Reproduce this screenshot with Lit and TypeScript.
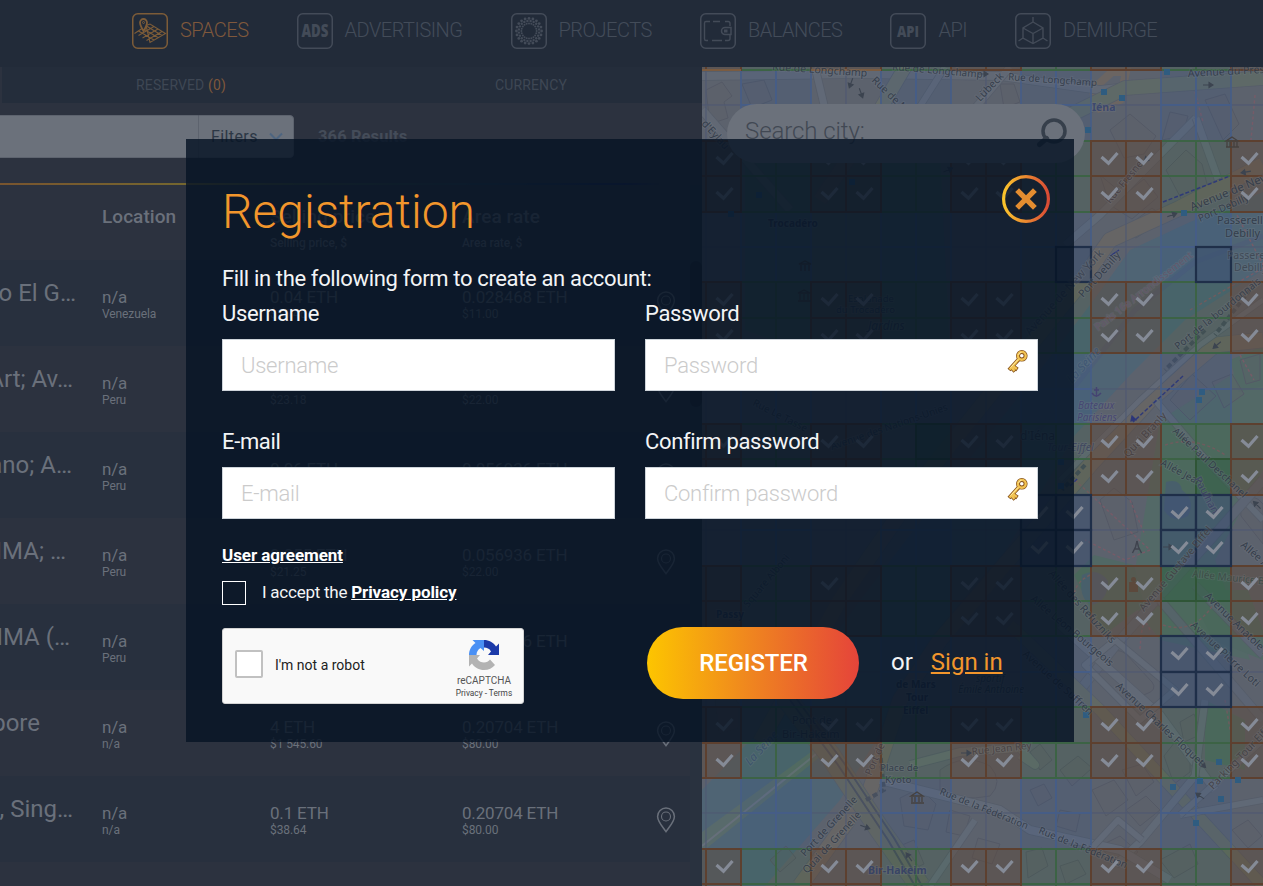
import { LitElement, html, svg, css } from "lit";
import { customElement } from "lit/decorators.js";

const LIGHT = "#434b58";

/* ---------- Map ---------- */

const COLS = Array.from({ length: 17 }, (_, i) => 671 + i * 35);
const rowY = (k: number) => Math.round(70 + 35.4 * k);

type Kind = "sold" | "free" | "blue" | "plain" | "navy" | "park";

const NAVY = new Set(["5:10", "5:14", ...[12, 13].flatMap((r) => [9, 10, 13, 14].map((c) => `${r}:${c}`)), ...[16, 17].flatMap((r) => [13, 14].map((c) => `${r}:${c}`))]);
const PARK = new Set(["10:6", "11:14", "14:13", "14:14"]);
const UNCHECKED = new Set(["5:10", "5:14", "14:0", "14:4", "15:0", "15:3", "15:4"]);

const kindOf = (r: number, c: number): Kind => {
  const key = `${r}:${c}`;
  if (NAVY.has(key)) return "navy";
  if (PARK.has(key)) return "park";
  const inner = ((c % 4) + 4) % 4 === 1 || ((c % 4) + 4) % 4 === 2;
  const band = ((r % 4) + 4) % 4 >= 2;
  if (band) return inner ? "free" : "sold";
  return inner ? "blue" : "plain";
};

const FILL: Record<Kind, [string, number]> = {
  sold: ["#5c4f49", 0.62],
  free: ["#446057", 0.35],
  blue: ["#475b7c", 0.42],
  plain: ["#596172", 0.35],
  navy: ["#3d5270", 0.65],
  park: ["#38604b", 0.75],
};
const STROKE: Record<Kind, [string, number]> = {
  sold: ["#5d402f", 2],
  free: ["#3c6345", 2],
  blue: ["#465e88", 1.6],
  plain: ["#4f5972", 0.7],
  navy: ["#1f2f49", 2.2],
  park: ["#2f5536", 2],
};
const ORDER: Kind[] = ["plain", "blue", "free", "park", "sold", "navy"];

// [x, y, rotation, size, colour, text, style]
type Label = [number, number, number, number, string, string, string?];
const INK = "#303947";
const LABELS: Label[] = [
  [772, 70, 4, 10.5, INK, "Rue de Longchamp"],
  [892, 70, 5, 10, INK, "Rue de Longchamp"],
  [1008, 80, 4, 9.8, INK, "Rue de Longchamp"],
  [871, 81, 44, 10.5, INK, "Rue de M"],
  [980, 102, -46, 10.5, INK, "Lübeck"],
  [701, 124, 48, 10.5, INK, "d'Eylau"],
  [1092, 111, 0, 10.5, "#38446e", "Iéna", "bold"],
  [1188, 77, -3, 10.5, INK, "Avenue du Président"],
  [1192, 211, -22, 11.5, INK, "Avenue de New York"],
  [1200, 222, -24, 10, INK, "Port Debilly"],
  [1110, 204, -50, 10, "#453d42", "Rue Fresnel"],
  [1083, 298, -48, 10.5, INK, "Port Debilly"],
  [1030, 336, -48, 11.5, "#3a4250", "Avenue de New York"],
  [1217, 224, 0, 11, INK, "Passerelle"],
  [1225, 237, 0, 11, INK, "Debilly"],
  [1227, 259, 0, 10.5, "#3d4652", "Passerelle"],
  [1234, 271, 0, 10.5, "#3d4652", "Debilly"],
  [1098, 331, -38, 10, "#64576a", "Paris 16e Arrondissement"],
  [1178, 350, -39, 10, INK, "Port de la bourdonnais"],
  [1072, 384, -48, 12, "#3d5573", "La Seine", "italic"],
  [1078, 409, 0, 10, "#454372", "Bateaux", "italic"],
  [1077, 421, 0, 10, "#454372", "Parisiens", "italic"],
  [1047, 451, 0, 10.5, "#3d4560", "Tour-Eiffel", "italic"],
  [1020, 440, 0, 12, INK, "d'Iéna"],
  [1128, 458, -47, 10.5, "#453d3e", "Quai Branly"],
  [1172, 432, 43, 10, INK, "Allée Paul Deschanel"],
  [1160, 465, 28, 10, INK, "Allée Jean"],
  [1194, 479, 62, 10.5, "#3c3f66", "Paulhan"],
  [1240, 546, 41, 10.5, INK, "Allée Adrienne"],
  [1192, 577, 6, 10, "#3b4a45", "Allée Maurice Baumont"],
  [1144, 612, -50, 10.5, "#413e42", "Avenue Gustave Eiffel"],
  [1204, 597, 44, 10.5, INK, "Avenue Anatole France"],
  [1190, 626, 43, 10.5, INK, "Avenue Pierre Loti"],
  [1030, 600, 40, 10.5, INK, "Allée Léon Bourgeois"],
  [1048, 574, 48, 10.5, INK, "Allée des Refuzniks"],
  [1022, 655, 42, 10.5, INK, "Avenue de Suffren"],
  [1115, 687, 43, 10.5, INK, "Avenue Charles Floquet"],
  [1213, 790, -46, 10.5, "#413e42", "Parking Tour Eiffel"],
  [972, 755, -6, 10, "#463f41", "Rue Jean Rey"],
  [880, 771, 0, 9.8, INK, "Place de"],
  [885, 783, 0, 9.8, INK, "Kyoto"],
  [939, 794, 22, 9.8, INK, "Rue de la Fédération"],
  [1038, 833, 22, 9.8, INK, "Rue de la Fédération"],
  [750, 766, -47, 11.5, "#39506a", "La Seine", "italic"],
  [805, 857, -47, 10.2, INK, "Port de Grenelle"],
  [807, 874, -47, 10.2, INK, "Quai de Grenelle"],
  [871, 776, -66, 10, "#443d42", "Port de"],
  [868, 874, 0, 10.5, "#343f66", "Bir-Hakeim", "bold"],
  [768, 227, 0, 10, "#26324d", "Trocadéro", "bold"],
  [868, 330, 0, 12, "#2c3a4c", "Jardins", "italic"],
  [848, 302, 0, 9.5, "#2c3a4c", "Esplanade"],
  [836, 313, 0, 9.5, "#2c3a4c", "du Trocadéro"],
  [752, 405, 27, 10, "#2c3a4c", "Rue Le Tasse"],
  [832, 450, -19, 10, "#2c3a4c", "Avenue des Nations-Unies"],
  [748, 608, -50, 10, "#2c3a4c", "Square Alboni"],
  [716, 618, 0, 10, "#26324d", "Passy", "bold"],
  [792, 724, 0, 11, INK, "Pont de"],
  [782, 738, 0, 11, INK, "Bir-Hakeim"],
  [896, 688, 0, 10, "#26324d", "de Mars", "bold"],
  [906, 701, 0, 10, "#26324d", "Tour", "bold"],
  [903, 714, 0, 10, "#26324d", "Eiffel", "bold"],
  [976, 682, 0, 10, "#2c3a4c", "sportif", "italic"],
  [958, 693, 0, 10, "#2c3a4c", "Émile Anthoine", "italic"],
];

const ROADS: [string, number, string][] = [
  ["M702 76 L860 74 L1000 76 L1100 90 L1263 72", 8, "#6a7079"],
  ["M905 67 L868 130 L820 200", 13, "#707663"],
  ["M945 67 L905 130", 6, "#6a7079"],
  ["M1010 67 L948 140", 7, "#6a7079"],
  ["M702 110 L790 210", 8, "#6a7079"],
  ["M815 67 L830 130", 7, "#69717d"],
  ["M1060 120 L1125 88 L1263 78", 14, "#657160"],
  ["M1196 118 L1100 215 L1065 245", 7, "#68717b"],
  ["M1196 118 L1222 190", 7, "#68717b"],
  ["M1263 165 L1180 208 L1110 240 L1075 290 L1010 370 L930 470 L840 600 L760 742", 15, "#74695a"],
  ["M1263 340 L1215 345 L1150 400 L1090 465 L1030 535 L940 640 L900 700 L870 790 L800 886", 15, "#74695c"],
  ["M1263 300 L1200 345 L1140 400 L1060 480", 5, "#6c727c"],
  ["M1155 400 L1215 470 L1263 520", 6, "#68717b"],
  ["M1263 480 L1210 540 L1120 640 L1080 690", 9, "#5f6875"],
  ["M1195 585 L1263 655", 8, "#5f6875"],
  ["M1160 600 L1263 720", 8, "#5f6875"],
  ["M1060 625 L1160 715 L1215 790", 8, "#6a717b"],
  ["M1115 640 L1085 665 L1140 720 L1175 690 L1115 640", 6, "#6a717b"],
  ["M1010 625 L1100 710 L1263 886", 11, "#6a7058"],
  ["M1205 700 L1195 776 L1140 842 L1115 865", 7, "#68717b"],
  ["M880 780 L1000 810 L1030 830 L1120 850 L1170 880", 8, "#69717d"],
  ["M1090 850 L1118 820 L1142 840", 6, "#69717d"],
  ["M910 765 L960 752 L1020 748 L1035 765 L1020 755", 8, "#69736f"],
  ["M975 820 L930 886", 6, "#68717b"],
  ["M1180 815 L1263 800", 6, "#68717b"],
  ["M1263 740 L1180 815", 6, "#68717b"],
  ["M780 690 L830 755 L880 830 L920 886", 20, "#666b58"],
];

const BUILDINGS = [
  "M706 90 l16 -8 l10 14 l-8 6 l4 16 l-18 6z", "M742 84 l22 -4 l8 20 l-20 8z", "M1000 84 l14 0 l6 18 l-16 6z", "M1110 130 l20 -16 l26 22 l-12 18 l-20 4z",
  "M1100 175 l24 20 l20 -16 l14 18 l-26 22 l-22 -14z", "M1166 170 l20 -20 l16 14 l6 24 l-24 16z", "M1205 100 l20 -6 l14 30 l-16 16z", "M1170 112 l18 4 l-6 20 l-20 4z",
  "M1122 230 l30 -22 l14 10 l-30 20z", "M1170 400 l22 -26 l24 22 l-26 24z", "M1212 382 l20 -8 l12 20 l-20 14z", "M1240 360 l20 -6 l0 26 l-14 4z",
  "M1108 656 q8 -10 18 -2 l26 28 q6 8 -6 12 l-12 4 l-30 -30z", "M1240 500 q14 -8 23 4 l0 40 l-22 -28z", "M1100 500 l14 -12 l18 14 l6 30 l-24 8z",
  "M1060 770 l18 -14 l14 12 l-20 18z", "M1030 752 l10 -8 l12 16 l-12 10z", "M1092 790 l22 -10 l14 20 l-22 16z", "M1122 770 l20 -6 l12 18 l-18 14z", "M1030 790 l14 -6 l8 14 l-14 8z",
  "M1100 846 l20 -10 l18 16 l-20 16z", "M1160 860 l30 -16 l8 20 l-24 14z", "M1164 756 l14 -18 l12 10 l0 24 l-16 12z", "M1180 722 l14 -8 l8 20 l-18 8z",
  "M1232 830 l16 -10 l14 16 l-14 12z", "M1026 852 l16 -4 l6 18 l-20 12z", "M1060 866 l18 -6 l8 14 l-20 10z", "M900 798 l20 -10 l16 16 l-8 26 l-24 -4z",
  "M890 850 l24 -10 l10 24 l-22 10z", "M950 810 l20 6 l-6 20 l-18 -4z", "M978 838 l22 6 l-8 20 l-20 -6z", "M940 770 q24 -18 50 -4 q14 16 0 30 q-30 6 -50 -6z",
  "M1060 810 l20 4 l-4 18 l-20 -6z", "M1126 810 l20 -14 l14 14 l-20 16z", "M770 860 l16 -14 l10 12 l-16 14z", "M715 700 q16 -10 24 4 l0 24 l-20 6z",
];

const arrows: [number, number, number][] = [[983, 74, 0], [861, 93, 70], [851, 83, 110], [1208, 85, 0], [1172, 215, -20], [1148, 158, 140], [1217, 345, 140], [1257, 505, 225], [1202, 764, 45], [1200, 796, 215], [865, 827, 20], [909, 857, 235], [1168, 547, 0], [966, 753, 0], [948, 170, -25], [1246, 172, 170]];

const POIS: [number, number][] = [[1104, 92], [1122, 98], [1167, 72], [1088, 130], [1184, 213], [1202, 392], [1199, 400], [1086, 715], [1219, 762], [1173, 787], [1200, 781], [1221, 799], [1196, 823], [1238, 780], [759, 195], [852, 182], [731, 214], [1061, 462], [1061, 486]];

@customElement("space-map")
export class SpaceMap extends LitElement {
  static styles = css`
    :host { display: block; width: 561px; height: 819px; overflow: hidden; }
    .canvas { display: block; font-family: "Noto Sans", sans-serif; }
  `;

  private cells() {
    const list: { r: number; c: number; kind: Kind }[] = [];
    for (let r = -1; r < 24; r++) for (let c = -1; c < 16; c++) list.push({ r, c, kind: kindOf(r, c) });
    return list.sort((a, b) => ORDER.indexOf(a.kind) - ORDER.indexOf(b.kind));
  }

  private cell({ r, c, kind }: { r: number; c: number; kind: Kind }) {
    const x = COLS[c + 1], y = rowY(r), h = rowY(r + 1) - y;
    return svg`
      <rect x=${x} y=${y} width="35" height=${h} fill=${FILL[kind][0]} fill-opacity=${FILL[kind][1]}
        stroke=${STROKE[kind][0]} stroke-width=${STROKE[kind][1]}></rect>`;
  }

  private check({ r, c, kind }: { r: number; c: number; kind: Kind }) {
    if ((kind !== "sold" && kind !== "navy") || UNCHECKED.has(`${r}:${c}`) || c < 0 || r < 0) return null;
    return svg`<path d="M${COLS[c + 1] + 10.5} ${rowY(r) + 16} l7 6.2 l9 -10.2" fill="none" stroke="#858b97" stroke-width="3.2"></path>`;
  }

  render() {
    const cells = this.cells();
    return html`
      <svg class="canvas" width="561" height="819" viewBox="702 67 561 819">
        <rect x="702" y="67" width="561" height="819" fill="#60646b"></rect>
        <path d="M1263 192 L1190 222 L1130 250 L1090 305 L1040 370 L960 470 L860 600 L780 710 L702 790 V886 H765 L840 800 L900 700 L1000 560 L1075 435 L1130 375 L1185 320 L1263 270Z" fill="#476878"></path>
        <path d="M1263 236 L1195 262 L1135 310 L1080 380 L1030 440" fill="none" stroke="#455f7c" stroke-width="5"></path>
        <path d="M702 832 L830 738 L826 752 L702 852Z" fill="#587466"></path>
        <path d="M702 846 L826 746" fill="none" stroke="#747d85" stroke-width="2"></path>
        <path d="M1160 420 L1263 355 V470 L1215 560 L1250 660 L1160 640 L1130 600 L1150 480Z" fill="#4f7160"></path>
        <path d="M1188 590 l60 0 l15 40 l0 30 l-50 -20z M1205 700 l40 20 l0 50 l-40 -10z M1230 360 l33 -14 v40 l-24 6z M1074 575 l20 -20 l40 10 l10 40 l-40 30z" fill="#4b705c"></path>
        <path d="M745 150 L940 150 L950 350 L880 380 L745 330Z" fill="#4e6c60"></path>
        <path d="M1166 482 q14 -4 16 8 q14 10 6 26 q-16 8 -24 -6z M1082 575 q16 -8 26 6 q0 20 -16 24 q-14 -6 -10 -30z" fill="#46607a"></path>
        <path d="M1092 90 L1112 72 H1126 L1120 100 L1100 108Z" fill="none" stroke="#7c6a55" stroke-width="8"></path>
        ${BUILDINGS.map((d) => svg`<path d=${d} fill="#64605f" fill-opacity=".3" stroke="#50535c" stroke-width="1"></path>`)}
        ${ROADS.map(([d, w, color]) => svg`
          <path d=${d} fill="none" stroke="#525a62" stroke-width=${w + 1.6} stroke-linejoin="round"></path>
          <path d=${d} fill="none" stroke=${color} stroke-width=${w} stroke-linejoin="round"></path>`)}
        <path d="M790 700 L838 765 L888 840 L915 886 M796 698 L844 763 L894 838 L922 886" fill="none" stroke="#3d4452" stroke-width="2"></path>
        <path d="M1237 215 L1263 265 M1075 480 L1150 550 L1125 560 L1085 540 M1130 500 L1145 535 M1165 445 q30 -10 60 10 M1240 355 l14 25 M1090 575 q-20 10 -15 30 M1190 310 L1263 268 M1163 625 q30 10 50 -20 M1225 700 l6 35 M1150 630 q-8 -20 -10 20 M1195 92 l8 30 M1255 95 l-4 45" fill="none" stroke="#925760" stroke-width="1.4" stroke-dasharray="3 2.4"></path>
        <path d="M880 750 L884 790 L866 800 M1085 465 L1062 490 M1205 330 L1165 370 M1250 290 L1215 335" fill="none" stroke="#39424d" stroke-width="4" stroke-dasharray="5 3"></path>
        <rect x="702" y="67" width="561" height="819" fill="#59616e" fill-opacity=".2"></rect>
        ${cells.map((c) => this.cell(c))}
        <path d="M702 70 H741 M811 70 H881" stroke="#7b5c41" stroke-width="2"></path>
        ${POIS.map(([x, y]) => svg`<rect x=${x - 3} y=${y - 3} width="6" height="6" fill="#2f5c80"></rect>`)}
        <path d="M1183 376 L1133 422 M1163 202 L1230 176 M1070 486 L1078 478" fill="none" stroke="#2f3a78" stroke-width="1.5" stroke-dasharray="4 2"></path>
        <path d="M1131 421 l5 -1 l-4 -4z M1110 256 L1119 250" fill="#2c3678" stroke="#2c3678" stroke-width="1.2"></path>
        ${arrows.map(([x, y, a]) => svg`<path transform="translate(${x} ${y}) rotate(${a})" d="M-5 0 H5 M1 -2.500 L5 0 L1 2.500Z" stroke="#3c4450" stroke-width="1.100" fill="#3c4450"></path>`)}
        <path d="M1226 141 l6 -4 l6 4z M1227 142 v5 M1230 142 v5 M1234 142 v5 M1237 142 v5 M1226 147 h13 M911 796 l6 -4 l6 4z M912 797 v5 M915 797 v5 M919 797 v5 M922 797 v5 M911 803 h13 M799 264 l6 -3 l6 3z M801 265 v6 M805 265 v6 M809 265 v6 M798 293 l6 -3 l6 3z M800 294 v6 M804 294 v6 M808 294 v6 M798 301 h13" fill="none" stroke="#45413f" stroke-width="1.300"></path>
        <path d="M1096.500 387 v10 M1092 393 q4 6 9 0 M1094 390 h5" fill="none" stroke="#454372" stroke-width="1.4"></path>
        <path d="M1137 541 l-1.500 6 l-3 6 M1137 541 l1.500 6 l3 6 M1134 549 h6" fill="none" stroke="#3f434e" stroke-width="1.4"></path>
        <path d="M1129 582 h9 v10 h-9z" fill="#5c493c"></path><circle cx="1133.500" cy="579.500" r="2.500" fill="#5c493c"></circle>
        ${LABELS.map(([x, y, a, s, color, text, style]) => svg`
          <text transform="translate(${x} ${y}) rotate(${a})" font-size=${s} fill=${color} fill-opacity=".9" stroke="#7b818a" stroke-opacity=".22" stroke-width="2" paint-order="stroke"
            font-style=${style === "italic" ? "italic" : "normal"} font-weight=${style === "bold" ? 700 : 400}>${text}</text>`)}
        ${cells.map((c) => this.check(c))}
      </svg>`;
  }
}

/* ---------- Icons ---------- */

const box = (color: string, inner: unknown) => html`
  <svg width="36" height="36" viewBox="0 0 36 36" fill="none" stroke=${color}>
    <rect x=".75" y=".75" width="34.500" height="34.500" rx="5" stroke-width="1.500"></rect>${inner}
  </svg>`;

const label = (text: string, size: number, width: number) => svg`<text x="18" y="24" text-anchor="middle" font-family="Open Sans, sans-serif" font-weight="800" font-size=${size}
  textLength=${width} lengthAdjust="spacingAndGlyphs" fill=${LIGHT} stroke="none">${text}</text>`;

const dots = [7.6, 10.2, 12.6].flatMap((r, k) => Array.from({ length: 20 }, (_, i) => {
  const a = ((i + (k % 2) / 2) * Math.PI) / 10;
  return svg`<circle cx=${18 + r * Math.cos(a)} cy=${18 + r * Math.sin(a)} r=${1 + k * 0.2} fill=${LIGHT} stroke="none"></circle>`;
}));

const NAV = [
  { text: "SPACES", active: true, icon: box("#7d5c38", svg`<path d="M2.500 20.500 L10 15.500 M14 12.500 L18 11 L33.500 20.500 L18 29.500 Z M6.500 22.500 L22 13.500 M10.500 25 L26 16 M14.500 27.500 L30 18.500 M6.500 18 L22 27 M10.500 15.500 L26 24.500 M14.500 13 L30 22.500" stroke-width="1.100"></path>
      <path d="M11.500 18 C8 12.500 8 11 8 9.500 a3.500 3.500 0 0 1 7 0 C15 11 15 12.500 11.500 18Z" stroke-width="1.800" fill="#222b39"></path><circle cx="11.500" cy="9.500" r="1"></circle>`) },
  { text: "ADVERTISING", icon: box(LIGHT, label("ADS", 17, 27)) },
  { text: "PROJECTS", icon: box(LIGHT, dots) },
  { text: "BALANCES", icon: box(LIGHT, svg`<path d="M10 8.500 H6 Q4.500 8.500 4.500 10 V26 Q4.500 27.500 6 27.500 H8 M13 8.500 H20 M25 8.500 H28 Q30 8.500 30 10.500 V13 M12 27.500 H22 M25 27.500 H28 Q30 27.500 30 25.500 V22" stroke-width="1.400"></path><path d="M31 14.500 H25 a3.500 3.500 0 0 0 0 7 H31Z" stroke-width="1.500"></path><path d="M24 18 h3.500" stroke-width="3"></path>`) },
  { text: "API", icon: box(LIGHT, label("API", 15.5, 22)) },
  { text: "DEMIURGE", icon: box(LIGHT, svg`<path d="M18 9 L28 15 V25 L18 30.500 L8 25 V15Z M8 15 L18 20.500 L28 15 M18 20.500 V30 M18 9 V4 M8 25 L3.500 28 M28 25 L32.500 28" stroke-width="1.400"></path>`) },
];

const pin = html`<svg width="20" height="26" viewBox="0 0 20 26" fill="none" stroke="#6a707b" stroke-width="1.500">
  <path d="M10 24.600 C6 19 1.600 14.500 1.600 9.500 a8.400 8.400 0 0 1 16.800 0 C18.400 14.500 14 19 10 24.600Z"></path><circle cx="10" cy="9.500" r="4.500" stroke-width="1.100"></circle></svg>`;

const key = html`<svg width="22" height="26" viewBox="0 0 22 26">
  <g fill="none" stroke="#84501b" stroke-width="4"><circle cx="14.800" cy="6.800" r="3.800"></circle><path d="M12.200 9.800 L2 21 M4.500 18.500 l3.500 4 M7 18 l3.500 2.500"></path></g>
  <g fill="none" stroke="#f2c352" stroke-width="2.400"><circle cx="14.800" cy="6.800" r="3.900"></circle><path d="M12.200 9.800 L2.500 20.500 M4.500 18.500 l3 3.400 M6.500 17.500 l3.400 2.400"></path></g>
  <path d="M11 10.500 L3.500 18.700 M11.600 6 a3.500 3.500 0 0 1 3 -2.800" fill="none" stroke="#fdeaa4" stroke-width="1"></path></svg>`;

/* ---------- Page ---------- */

interface Row { name: string; end: number; place: string; price: string; usd: string; rate: string; rateUsd: string }
const ROWS: Row[] = [
  { name: "Museo El G…", end: 26, place: "Venezuela", price: "0.04 ETH", usd: "$15.46", rate: "0.028468 ETH", rateUsd: "$11.00" },
  { name: "Art; Av…", end: 29, place: "Peru", price: "0.06 ETH", usd: "$23.18", rate: "0.056936 ETH", rateUsd: "$22.00" },
  { name: "Miguel Cano; A…", end: 30, place: "Peru", price: "0.06 ETH", usd: "$23.18", rate: "0.056936 ETH", rateUsd: "$22.00" },
  { name: "LIMA; …", end: 36, place: "Peru", price: "0.055 ETH", usd: "$21.25", rate: "0.056936 ETH", rateUsd: "$22.00" },
  { name: "LIMA (…", end: 32, place: "Peru", price: "0.055 ETH", usd: "$21.25", rate: "0.056936 ETH", rateUsd: "$22.00" },
  { name: "Singapore", end: 62, place: "n/a", price: "4 ETH", usd: "$1 545.60", rate: "0.20704 ETH", rateUsd: "$80.00" },
  { name: ", Sing…", end: 29, place: "n/a", price: "0.1 ETH", usd: "$38.64", rate: "0.20704 ETH", rateUsd: "$80.00" },
  { name: "", end: 0, place: "", price: "", usd: "", rate: "", rateUsd: "" },
];

@customElement("app-root")
export class AppRoot extends LitElement {
  static styles = css`
    :host { display: block; position: relative; width: 1263px; height: 886px; overflow: hidden; background: #2c323f; font-family: Roboto, sans-serif; color: #6a707b; }
    * { box-sizing: border-box; }
    svg { display: block; flex: none; }
    .nav { display: flex; gap: 48px; height: 67px; padding: 13px 0 0 132px; background: #222b39; }
    .nav-item { display: flex; align-items: center; gap: 12px; height: 36px; font-size: 20px; font-weight: 300; color: #434c59; white-space: nowrap; }
    .nav-text { margin-top: -2px; letter-spacing: -.49px; }
    .active { color: #7f583c; }
    .main { display: flex; height: 819px; }
    .panel { width: 702px; overflow: hidden; }
    .tabs { display: grid; grid-template-columns: 350px 350px; height: 36px; margin-left: 2px; padding-left: 4px; background: #242d3b; font-size: 14px; line-height: 37px; text-align: center; color: #3e4754; letter-spacing: .12px; }
    .count { color: #7f583c; }
    .tools { display: flex; height: 80px; padding-top: 12px; align-items: flex-start; }
    .search { width: 198px; height: 43px; background: #6b717b; border-top: 1px solid #5d636e; border-bottom: 1px solid #5d636e; }
    .filters { display: flex; align-items: center; gap: 10px; width: 96px; height: 43px; padding-left: 12px; background: #6b717b; border: 1px solid #5d636e; border-radius: 0 4px 4px 0; color: #2c3745; font-size: 16px; letter-spacing: .4px; }
    .results { margin-left: 24px; line-height: 43px; font-size: 16.5px; font-weight: 700; color: #444c59; letter-spacing: .1px; }
    .rule { height: 2px; background: linear-gradient(90deg, #79552f, #74672f 190px, #3e5037 300px, #253a4a 480px, #17204e 625px, transparent 660px); }
    .table { display: flex; height: 701px; }
    .rows { width: 690px; }
    .track { width: 12px; padding-top: 76px; background: #29323f; }
    .thumb { height: 146px; background: #1d2531; border-radius: 6px; }
    .head, .row { display: grid; grid-template-columns: 102px 168px 192px 194px 34px; }
    .head { height: 75px; padding-top: 20px; font-size: 19px; font-weight: 500; line-height: 24px; letter-spacing: .05px; }
    .head .sub { margin-top: 6px; line-height: 16px; font-weight: 500; letter-spacing: -.1px; }
    .row { height: 86px; white-space: nowrap; }
    .row:nth-child(even) { background: #28303e; }
    .name { display: flex; justify-content: flex-end; overflow: hidden; font-size: 24px; line-height: 66px; }
    .cell { padding-top: 27px; font-size: 17px; line-height: 20px; letter-spacing: -.18px; }
    .sub { font-size: 12px; line-height: 14px; letter-spacing: -.1px; }
    .pin { padding-top: 31px; }
    .modal { position: absolute; left: 186px; top: 139px; width: 888px; height: 603px; padding: 36px; background: rgba(6, 19, 37, .82); color: #f3f4f6; }
    .title-bar { display: flex; justify-content: space-between; height: 84px; padding-right: 24px; margin-right: -36px; }
    .title { margin: 0; font-size: 48px; line-height: 74px; font-weight: 300; color: #f2962c; }
    .intro { margin: 0; font-size: 22px; line-height: 40px; letter-spacing: -.35px; }
    .fields { display: grid; grid-template-columns: 393px 393px; column-gap: 30px; }
    .field { display: block; height: 128px; }
    .caption { display: block; height: 40px; font-size: 22px; line-height: 30px; letter-spacing: -.35px; }
    .input { display: flex; justify-content: space-between; height: 52px; padding: 0 8px 0 18px; background: #fff; border: 1px solid #ced4da; color: #cbcbcb; font-size: 22px; line-height: 51px; font-weight: 300; letter-spacing: -.25px; }
    .input svg { margin-top: 9px; }
    .terms { margin-top: -12px; font-size: 17px; line-height: 24px; letter-spacing: -.25px; }
    .strong { font-weight: 700; text-decoration: underline; color: #fff; letter-spacing: -.08px; }
    .accept { display: flex; gap: 16px; height: 24px; margin-top: 14px; line-height: 22px; }
    .checkbox { width: 24px; height: 24px; border: 1px solid #fff; }
    .actions { display: flex; margin-top: 22px; }
    .captcha { display: flex; align-items: center; width: 302px; height: 76px; margin-top: 1px; padding-left: 12px; background: #f9f9f9; border: 1px solid #d3d3d3; border-radius: 3px; color: #222; }
    .box { flex: none; width: 28px; height: 28px; margin-top: -4px; background: #fff; border: 2px solid #c1c1c1; border-radius: 2px; }
    .robot { flex: none; width: 179px; padding-left: 12px; margin-top: -2px; font-size: 14px; }
    .brand { display: flex; flex: none; flex-direction: column; align-items: center; width: 84px; margin-top: 7px; font-size: 10px; line-height: 12px; color: #555; }
    .brand svg { margin-bottom: 4px; }
    .legal { font-size: 8.3px; line-height: 13px; color: #444; white-space: nowrap; }
    .register { width: 212px; height: 72px; margin-left: 123px; padding-left: 1px; border-radius: 36px; background: linear-gradient(90deg, #fdc500, #f08a1d 45%, #e5443a); color: #fff; font-size: 24px; font-weight: 500; line-height: 72px; text-align: center; letter-spacing: -.15px; }
    .or { margin-left: 32px; font-size: 24px; line-height: 70px; }
    .signin { margin-left: 18px; font-size: 24px; line-height: 70px; color: #f2962c; text-decoration: underline; }
    .city { position: absolute; left: 727px; top: 104px; display: flex; justify-content: space-between; width: 358px; height: 59px; padding: 0 17px 0 18px; border-radius: 30px; background: #6b717b; color: #414853; font-size: 24px; font-weight: 300; line-height: 54px; letter-spacing: -.08px; }
    .city svg { margin-top: 14px; }
  `;

  private field(text: string, secret = false) {
    return html`<label class="field"><span class="caption">${text}</span><span class="input"><span>${text}</span>${secret ? key : null}</span></label>`;
  }

  render() {
    return html`
      <nav class="nav">
        ${NAV.map((n) => html`<div class="nav-item ${n.active ? "active" : ""}">${n.icon}<span class="nav-text">${n.text}</span></div>`)}
      </nav>
      <main class="main">
        <section class="panel">
          <div class="tabs"><span>RESERVED <span class="count">(0)</span></span><span>CURRENCY</span></div>
          <div class="tools">
            <div class="search"></div>
            <div class="filters">Filters<svg width="16" height="10" viewBox="0 0 16 10" fill="none" stroke="#4e6580" stroke-width="2"><path d="M2 1.500 L8 7.500 L14 1.500"></path></svg></div>
            <div class="results">366 Results</div>
          </div>
          <div class="rule"></div>
          <div class="table">
            <div class="rows">
              <div class="head"><span></span><span>Location</span><span>Selling price<div class="sub">Selling price, $</div></span><span>Area rate<div class="sub">Area rate, $</div></span></div>
              ${ROWS.map((r) => html`
                <div class="row">
                  <div class="name" style="padding-right:${r.end}px"><span>${r.name}</span></div>
                  <div class="cell">${r.place ? "n/a" : ""}<div class="sub">${r.place}</div></div>
                  <div class="cell">${r.price}<div class="sub">${r.usd}</div></div>
                  <div class="cell">${r.rate}<div class="sub">${r.rateUsd}</div></div>
                  <div class="pin">${r.place ? pin : null}</div>
                </div>`)}
            </div>
            <div class="track"><div class="thumb"></div></div>
          </div>
        </section>
        <space-map></space-map>
      </main>
      <div class="city"><span>Search city:</span>
        <svg width="32" height="32" viewBox="0 0 32 32" fill="none" stroke="#363f4b" stroke-width="3.500"><circle cx="18" cy="13" r="11"></circle><path d="M10.500 20.500 L3.500 26.500" stroke-width="5" stroke-linecap="round"></path></svg>
      </div>
      <section class="modal">
        <div class="title-bar">
          <h1 class="title">Registration</h1>
          <svg width="48" height="48" viewBox="0 0 48 48">
            <defs><linearGradient id="warm"><stop offset="0" stop-color="#fbc52c"></stop><stop offset="1" stop-color="#d94b35"></stop></linearGradient></defs>
            <circle cx="24" cy="24" r="22.400" fill="none" stroke="url(#warm)" stroke-width="3.200"></circle>
            <path d="M13.200 17 L17 13.200 L24 20.200 L31 13.200 L34.800 17 L27.800 24 L34.800 31 L31 34.800 L24 27.800 L17 34.800 L13.200 31 L20.200 24Z" fill="#e48d30"></path>
          </svg>
        </div>
        <p class="intro">Fill in the following form to create an account:</p>
        <div class="fields">
          ${this.field("Username")}${this.field("Password", true)}${this.field("E-mail")}${this.field("Confirm password", true)}
        </div>
        <div class="terms">
          <a class="strong">User agreement</a>
          <div class="accept"><span class="checkbox"></span><span>I accept the <a class="strong">Privacy policy</a></span></div>
        </div>
        <div class="actions">
          <div class="captcha">
            <div class="box"></div><div class="robot">I'm not a robot</div>
            <div class="brand">
              <svg width="32" height="32" viewBox="0 0 32 32">
                <path d="M16 1 C21 1 25.500 3.500 28 7.500 L31 4.500 V16 H20 L23 12.500 C21.500 9.500 19 8.500 16 8.500Z" fill="#1c3aa9"></path>
                <path d="M16 1 V12 L12.500 9 C10 10.500 8.500 13 8.500 16 H1 C1 11 3.500 6.500 7.500 4 L4.500 1Z" fill="#4a90f4"></path>
                <path d="M1 16 H12 L9 19.500 C11 22.500 13.500 23.500 16 23.500 C18.500 23.500 20.500 22.500 22 20.500 L27 26 C24.500 29 20.500 31 16 31 C11 31 6.500 28.500 4 24.500 L1 27.500Z" fill="#b3b3b3"></path>
              </svg>
              <span>reCAPTCHA</span><span class="legal">Privacy - Terms</span>
            </div>
          </div>
          <div class="register">REGISTER</div>
          <span class="or">or</span><a class="signin">Sign in</a>
        </div>
      </section>`;
  }
}
